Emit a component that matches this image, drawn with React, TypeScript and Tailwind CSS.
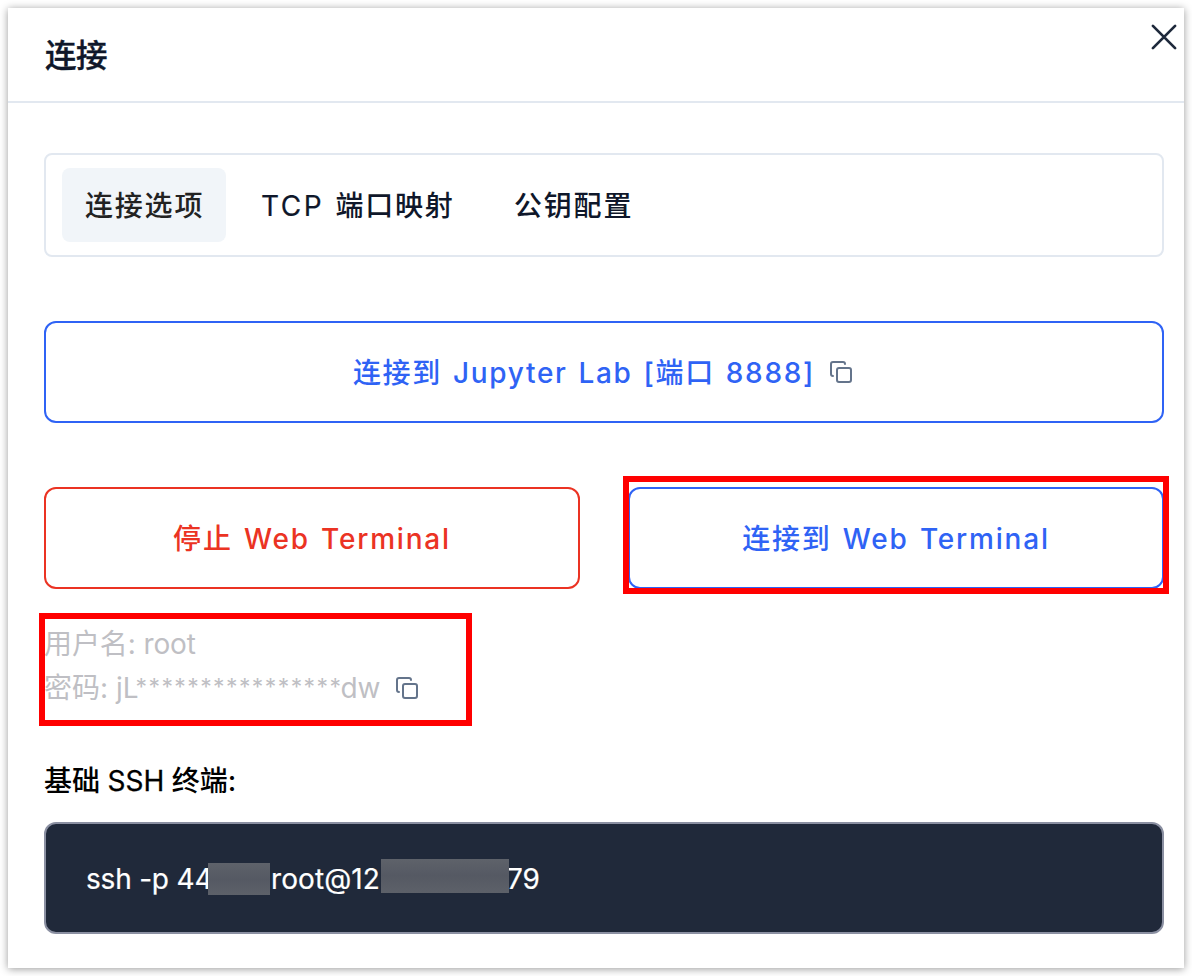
import { Copy } from "lucide-react";
import type { ReactNode } from "react";

function Tab({ className, children }: { className: string; children: ReactNode }) {
  return (
    <button
      type="button"
      className={`flex h-[74px] shrink-0 items-center whitespace-pre rounded-lg pt-0.5 text-[28px] font-medium tracking-[1.8px] ${className}`}
    >
      {children}
    </button>
  );
}

function Redacted({ className }: { className: string }) {
  return <span className={`z-10 shrink-0 bg-linear-to-b from-[#5e626a] via-[#555963] to-[#5d6169] ${className}`} />;
}

export default function App() {
  return (
    <div className="h-[976px] w-[1192px] overflow-hidden bg-white p-2 font-['Inter','Noto_Sans_CJK_SC',sans-serif]">
      <section className="flex h-[960px] flex-col bg-white shadow-[0_1px_8px_rgba(0,0,0,0.4)]">
        <header className="flex h-[95px] shrink-0 items-start justify-between border-b-2 border-[#e2e8f0] pl-[37px] pr-2">
          <h1 className="pt-6 text-[31.5px] font-medium leading-[48px] tracking-[-0.4px] text-[#0f172a] [-webkit-text-stroke:0.4px_#0f172a]">连接</h1>
          <button type="button" className="mt-[17px]" aria-label="关闭">
            <svg className="block size-6" viewBox="0 0 24 24" fill="none" stroke="#1e293b" strokeWidth="2.7" strokeLinecap="round" overflow="visible">
              <path d="M0.9 0.9 23.1 23.1M23.1 0.9 0.9 23.1" />
            </svg>
          </button>
        </header>

        <main className="flex flex-col pl-9 pr-5 pt-[50px]">
          <nav className="flex h-[104px] items-center rounded-lg border-2 border-[#e2e8f0] px-4 pb-px text-[#0f172a]">
            <Tab className="w-[164px] bg-[#f1f5f9] pl-[23px] text-[#222]">连接选项</Tab>
            <Tab className="ml-[14px] w-[228px] pl-[21px]">
              <span className="font-normal tracking-[2.5px] [-webkit-text-stroke:0.2px_#0f172a] [word-spacing:1px]">TCP </span>端口映射
            </Tab>
            <Tab className="ml-6 w-[164px] pl-[22px]">公钥配置</Tab>
          </nav>

          <button
            type="button"
            className="mt-16 flex h-[102px] items-center justify-center gap-[14px] rounded-xl border-2 border-[#2f63f5] text-[28px] font-medium tracking-[1.7px] text-[#2f63f5] [word-spacing:1.7px]"
          >
            <span className="-ml-0.5 pt-0.5">连接到 Jupyter Lab [端口 8888]</span>
            <Copy size={24} strokeWidth={2} className="text-[#64748b]" />
          </button>

          <div className="mt-16 grid grid-cols-[536px_536px] gap-12">
            <button
              type="button"
              className="h-[102px] rounded-xl border-2 border-[#eb3323] pt-0.5 text-[28px] font-medium tracking-[1.8px] text-[#eb3323] [word-spacing:2px]"
            >
              停止 Web Terminal
            </button>
            <div className="relative flex">
              <button
                type="button"
                className="h-[102px] flex-1 rounded-xl border-2 border-[#2f63f5] pt-0.5 text-[28px] font-medium tracking-[1.8px] text-[#2f63f5] [word-spacing:2px]"
              >
                连接到 Web Terminal
              </button>
              <span className="pointer-events-none absolute -bottom-[5px] -left-[5px] -right-[5px] -top-[11px] border-[6px] border-[#f00]" />
            </div>
          </div>

          <div className="relative mt-8 h-[90px] pt-px text-[28px] leading-[44px] text-[#bfbfc4]">
            <p className="tracking-[-0.1px]">用户名: root</p>
            <p className="flex h-11 items-center">
              <span className="whitespace-pre">密码: jL</span>
              <span className="-ml-[3px] w-[205px] shrink-0 -translate-y-px whitespace-nowrap text-[23px] tracking-[1.4px]">****************</span>
              <span className="tracking-[-0.3px]">dw</span>
              <Copy size={24} strokeWidth={2} className="ml-[15px] text-[#64748b]" />
            </p>
            <span className="pointer-events-none absolute -left-[5px] -top-2 h-[113px] w-[433px] border-[6px] border-[#f00]" />
          </div>

          <h2 className="mt-12 text-[28px] font-medium leading-[44px] text-black">
            基础 <span className="font-normal [-webkit-text-stroke:0.3px_#000]">SSH</span> 终端:
          </h2>

          <div className="mt-[19px] flex h-[112px] items-center rounded-xl border-2 border-[#8b90a2] bg-[#20293a] pl-10 text-[28px] text-white [-webkit-text-stroke:0.2px_#fff]">
            <span className="w-[122px] whitespace-nowrap pt-px tracking-[-0.2px]">ssh -p 44</span>
            <Redacted className="mt-[2px] h-8 w-[62px]" />
            <span className="ml-px w-[110px] whitespace-nowrap pt-px tracking-[0.1px]">root@12</span>
            <Redacted className="-mt-1 h-[34px] w-32" />
            <span className="-ml-[2px] pt-px">79</span>
          </div>
        </main>
      </section>
    </div>
  );
}
